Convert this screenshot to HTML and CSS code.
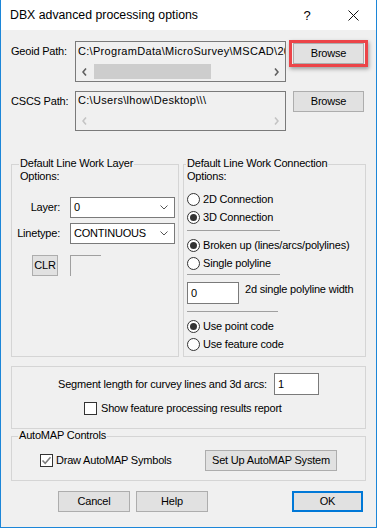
FILE: index.html
```html
<!DOCTYPE html>
<html lang="en">
<head>
    <meta charset="UTF-8">
    <title>DBX advanced processing options</title>
    <link rel="stylesheet" href="styles.css">
</head>
<body>
    <div class="window">
        <div class="titlebar">
            <span class="title">DBX advanced processing options</span>
            <span class="caption-btn">?</span>
            <span class="caption-btn">
                <svg width="11" height="11" viewBox="0 0 11 11"><path d="M0.5 0.5L10.5 10.5M10.5 0.5L0.5 10.5" stroke="#111" stroke-width="1" fill="none"/></svg>
            </span>
        </div>

        <div class="content">
            <div class="path-row">
                <div class="path-label">Geoid Path:</div>
                <div class="path-box">
                    <div class="path-text">C:\ProgramData\MicroSurvey\MSCAD\2019\Geoid\</div>
                    <div class="hscroll">
                        <span class="arrow"><svg width="5" height="8" viewBox="0 0 5 8"><path d="M4 0.5L1 4L4 7.5" fill="none" stroke="#606060" stroke-width="1.6"/></svg></span>
                        <span class="thumb"></span>
                        <span class="arrow right"><svg width="5" height="8" viewBox="0 0 5 8"><path d="M1 0.5L4 4L1 7.5" fill="none" stroke="#606060" stroke-width="1.6"/></svg></span>
                    </div>
                </div>
                <button class="btn browse highlighted">Browse</button>
            </div>

            <div class="path-row second">
                <div class="path-label">CSCS Path:</div>
                <div class="path-box short">
                    <div class="path-text">C:\Users\lhow\Desktop\\\</div>
                    <div class="hscroll disabled">
                        <span class="arrow"><svg width="5" height="8" viewBox="0 0 5 8"><path d="M4 0.5L1 4L4 7.5" fill="none" stroke="#c4c4c4" stroke-width="1.6"/></svg></span>
                        <span class="arrow right"><svg width="5" height="8" viewBox="0 0 5 8"><path d="M1 0.5L4 4L1 7.5" fill="none" stroke="#c4c4c4" stroke-width="1.6"/></svg></span>
                    </div>
                </div>
                <button class="btn browse">Browse</button>
            </div>

            <div class="groups">
                <div class="group layer-group">
                    <div class="group-title">Default Line Work Layer<br>Options:</div>
                    <div class="field-row first">
                        <span class="field-label">Layer:</span>
                        <div class="combo">0
                            <svg class="chev" width="8" height="5" viewBox="0 0 8 5"><path d="M0.5 0.5L4 4L7.5 0.5" fill="none" stroke="#555" stroke-width="1"/></svg>
                        </div>
                    </div>
                    <div class="field-row">
                        <span class="field-label">Linetype:</span>
                        <div class="combo">CONTINUOUS
                            <svg class="chev" width="8" height="5" viewBox="0 0 8 5"><path d="M0.5 0.5L4 4L7.5 0.5" fill="none" stroke="#555" stroke-width="1"/></svg>
                        </div>
                    </div>
                    <div class="clr-row">
                        <button class="btn clr-btn">CLR</button>
                        <div class="swatch"></div>
                    </div>
                </div>

                <div class="group conn-group">
                    <div class="group-title">Default Line Work Connection<br>Options:</div>
                    <div class="radio-row first"><span class="radio"></span>2D Connection</div>
                    <div class="radio-row"><span class="radio on"></span>3D Connection</div>
                    <div class="sep"></div>
                    <div class="radio-row"><span class="radio on"></span>Broken up (lines/arcs/polylines)</div>
                    <div class="radio-row"><span class="radio"></span>Single polyline</div>
                    <div class="sep short-gap"></div>
                    <div class="width-row">
                        <div class="num-input wide">0</div>
                        <span class="width-label">2d single polyline width</span>
                    </div>
                    <div class="sep after-input"></div>
                    <div class="radio-row"><span class="radio on"></span>Use point code</div>
                    <div class="radio-row"><span class="radio"></span>Use feature code</div>
                </div>
            </div>

            <div class="group segment-group">
                <div class="seg-row">
                    <span>Segment length for curvey lines and 3d arcs:</span>
                    <div class="num-input seg">1</div>
                </div>
                <div class="check-row">
                    <span class="checkbox"></span>
                    <span>Show feature processing results report</span>
                </div>
            </div>

            <div class="group automap-group">
                <div class="group-title">AutoMAP Controls</div>
                <div class="automap-row">
                    <div class="auto-check">
                        <span class="checkbox">
                            <svg width="11" height="11" viewBox="0 0 11 11"><path d="M1.5 5.5L4.2 8.3L9.5 2.2" fill="none" stroke="#7c7c7c" stroke-width="1.5"/></svg>
                        </span>
                        <span>Draw AutoMAP Symbols</span>
                    </div>
                    <button class="btn setup-btn">Set Up AutoMAP System</button>
                </div>
            </div>

            <div class="dialog-buttons">
                <button class="btn cancel-btn">Cancel</button>
                <button class="btn help-btn">Help</button>
                <button class="btn ok-btn">OK</button>
            </div>
        </div>
    </div>
</body>
</html>
```

FILE: styles.css
```css
* {
    box-sizing: border-box;
}
body {
    margin: 0;
    font-family: "Liberation Sans", Arial, sans-serif;
    font-size: 11px;
    line-height: 13px;
    letter-spacing: -0.2px;
    color: #000;
}
.window {
    width: 377px;
    height: 528px;
    border: 1px solid #1c86d8;
    border-top: 0;
    background: #f0f0f0;
    display: flex;
    flex-direction: column;
}
.titlebar {
    height: 30px;
    background: #fff;
    display: flex;
    align-items: center;
    padding-left: 9px;
    flex-shrink: 0;
}
.title {
    flex: 1;
    font-size: 12.3px;
    letter-spacing: 0;
    color: #000;
}
.caption-btn {
    width: 46px;
    height: 30px;
    display: flex;
    align-items: center;
    justify-content: center;
    font-size: 13px;
    letter-spacing: 0;
}
.content {
    flex: 1;
    padding: 11px 10px 0 10px;
}

/* path rows */
.path-row {
    display: flex;
    align-items: flex-start;
}
.path-row.second {
    margin-top: 9px;
}
.path-label {
    width: 64px;
    padding-top: 4px;
}
.path-box {
    width: 211px;
    height: 41px;
    border: 1px solid #7a7a7a;
    display: flex;
    flex-direction: column;
}
.path-box.short {
    height: 40px;
}
.path-text {
    height: 21px;
    padding: 3px 0 0 2px;
    white-space: nowrap;
    overflow: hidden;
    letter-spacing: 0.3px;
}
.path-box.short .path-text {
    height: 20px;
    padding-top: 2px;
}
.hscroll {
    height: 17px;
    display: flex;
    align-items: center;
}
.arrow {
    width: 17px;
    height: 17px;
    display: flex;
    align-items: center;
    justify-content: center;
}
.arrow.right {
    margin-left: auto;
}
.thumb {
    width: 117px;
    height: 15px;
    margin-left: 1px;
    background: #cdcdcd;
}

/* buttons */
.btn {
    font: inherit;
    letter-spacing: inherit;
    color: #000;
    background: #e1e1e1;
    border: 1px solid #adadad;
    padding: 0;
    height: 21px;
}
.browse {
    width: 71px;
    margin-left: 7px;
}
.browse.highlighted {
    margin-top: 2px;
    position: relative;
}
.browse.highlighted::after {
    content: "";
    position: absolute;
    left: -5px;
    right: -5px;
    top: -4px;
    bottom: -4px;
    border: 3px solid #ec4448;
    box-shadow: 1px 2px 4px rgba(0, 0, 0, 0.35);
}

/* group boxes */
.group {
    border: 1px solid #d5d5d5;
}
.group-title {
    display: block;
    width: fit-content;
    margin: -8px 0 0 7px;
    padding: 0 1px;
    background: #f0f0f0;
}
.groups {
    display: flex;
    gap: 4px;
    margin-top: 33px;
    height: 193px;
}
.layer-group {
    width: 168px;
}
.conn-group {
    width: 183px;
}
.conn-group .group-title {
    margin-left: 2px;
}
.field-row {
    display: flex;
    align-items: center;
    margin-top: 5px;
}
.field-row.first {
    margin-top: 14px;
}
.field-label {
    width: 48px;
    margin-right: 10px;
    text-align: right;
}
.combo {
    width: 105px;
    height: 21px;
    border: 1px solid #7a7a7a;
    background: #fff;
    display: flex;
    align-items: center;
    padding-left: 3px;
}
.chev {
    margin-left: auto;
    margin-right: 6px;
}
.clr-row {
    display: flex;
    margin-top: 11px;
}
.clr-btn {
    width: 26px;
    margin-left: 20px;
}
.swatch {
    width: 31px;
    height: 21px;
    margin-left: 12px;
    border-top: 1px solid #a0a0a0;
    border-left: 1px solid #a0a0a0;
}

/* radios */
.radio-row {
    display: flex;
    align-items: center;
    height: 18px;
    margin-left: 3px;
}
.radio-row.first {
    margin-top: 7px;
}
.radio {
    width: 13px;
    height: 13px;
    margin-right: 3px;
    border: 1px solid #333;
    border-radius: 50%;
    background: #fff;
    display: flex;
    align-items: center;
    justify-content: center;
}
.radio.on::after {
    content: "";
    width: 7px;
    height: 7px;
    border-radius: 50%;
    background: #333;
}
.sep {
    width: 93px;
    height: 1px;
    margin: 4px 0 5px 3px;
    background: #a0a0a0;
}
.sep.short-gap {
    margin: 2px 0 7px 3px;
}
.sep.after-input {
    margin: 7px 0 5px 3px;
    width: 91px;
}
.width-row {
    display: flex;
    align-items: flex-start;
    margin-left: 3px;
}
.num-input {
    height: 22px;
    border: 1px solid #7a7a7a;
    background: #fff;
    display: flex;
    align-items: center;
    padding-left: 3px;
}
.num-input.wide {
    width: 52px;
}
.width-label {
    margin-left: 6px;
    padding-top: 1px;
}

/* segment group */
.segment-group {
    margin-top: 9px;
    height: 63px;
}
.seg-row {
    display: flex;
    justify-content: center;
    align-items: center;
    margin-top: 6px;
}
.num-input.seg {
    width: 45px;
    margin-left: 7px;
}
.check-row {
    display: flex;
    align-items: center;
    margin: 7px 0 0 72px;
}
.checkbox {
    width: 13px;
    height: 13px;
    border: 1px solid #333;
    background: #fff;
    margin-right: 4px;
    display: flex;
    align-items: center;
    justify-content: center;
}

/* automap group */
.automap-group {
    margin-top: 7px;
    height: 45px;
}
.automap-group .group-title {
    margin-left: 6px;
}
.automap-row {
    display: flex;
    align-items: center;
    margin-top: 8px;
}
.auto-check {
    width: 165px;
    margin-left: 28px;
    display: flex;
    align-items: center;
}
.auto-check .checkbox {
    margin-right: 3px;
}
.setup-btn {
    width: 132px;
}

/* bottom buttons */
.dialog-buttons {
    display: flex;
    margin-top: 10px;
}
.cancel-btn {
    width: 72px;
    margin-left: 47px;
}
.help-btn {
    width: 72px;
    margin-left: 6px;
}
.ok-btn {
    width: 71px;
    margin-left: auto;
    margin-right: 3px;
    border: 2px solid #0078d7;
}
```
